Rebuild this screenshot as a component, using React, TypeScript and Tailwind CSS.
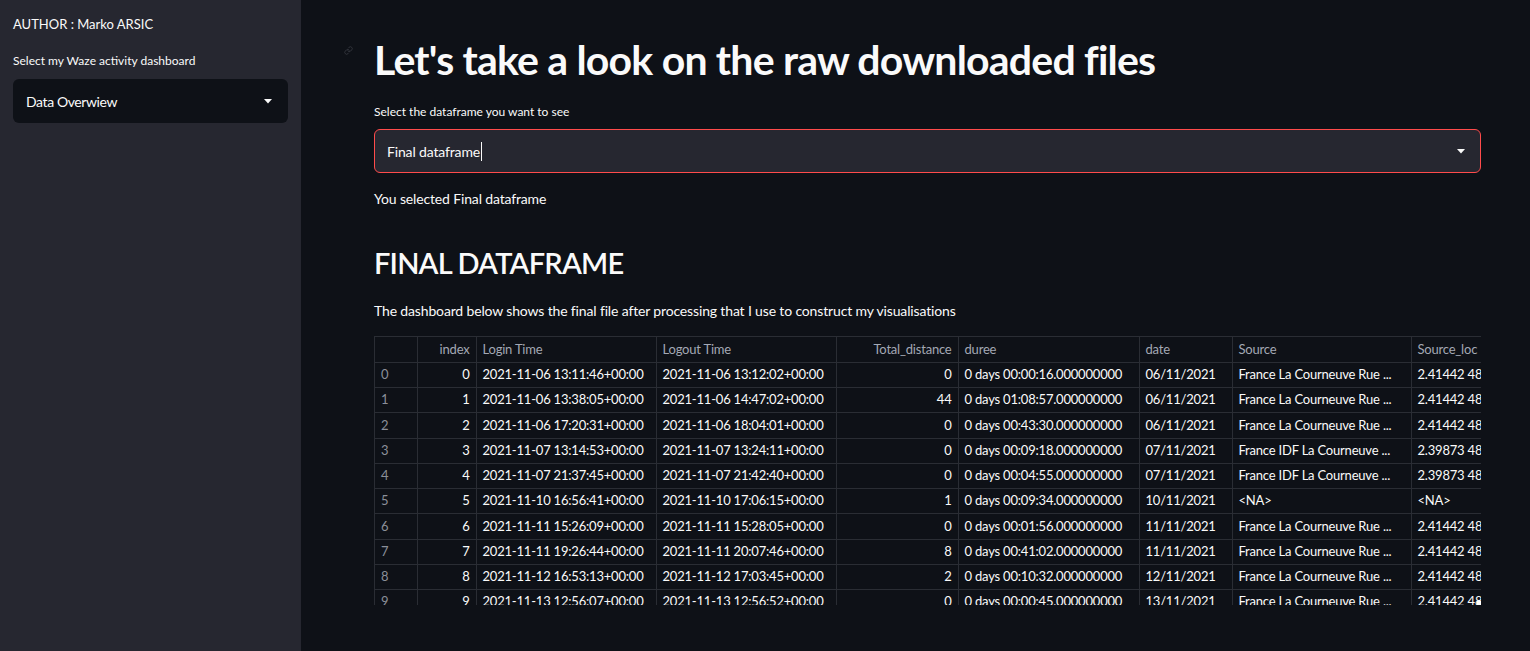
import React from 'react';
import { Link } from 'lucide-react';

const font = { fontFamily: 'Lato, "Noto Sans", sans-serif' };

type Row = [number, string, string, number, string, string, string, string];

const rows: Row[] = [
  [0, '2021-11-06 13:11:46+00:00', '2021-11-06 13:12:02+00:00', 0, '0 days 00:00:16.000000000', '06/11/2021', 'France La Courneuve Rue ...', '2.41442 48.'],
  [1, '2021-11-06 13:38:05+00:00', '2021-11-06 14:47:02+00:00', 44, '0 days 01:08:57.000000000', '06/11/2021', 'France La Courneuve Rue ...', '2.41442 48.'],
  [2, '2021-11-06 17:20:31+00:00', '2021-11-06 18:04:01+00:00', 0, '0 days 00:43:30.000000000', '06/11/2021', 'France La Courneuve Rue ...', '2.41442 48.'],
  [3, '2021-11-07 13:14:53+00:00', '2021-11-07 13:24:11+00:00', 0, '0 days 00:09:18.000000000', '07/11/2021', 'France IDF La Courneuve ...', '2.39873 48.'],
  [4, '2021-11-07 21:37:45+00:00', '2021-11-07 21:42:40+00:00', 0, '0 days 00:04:55.000000000', '07/11/2021', 'France IDF La Courneuve ...', '2.39873 48.'],
  [5, '2021-11-10 16:56:41+00:00', '2021-11-10 17:06:15+00:00', 1, '0 days 00:09:34.000000000', '10/11/2021', '<NA>', '<NA>'],
  [6, '2021-11-11 15:26:09+00:00', '2021-11-11 15:28:05+00:00', 0, '0 days 00:01:56.000000000', '11/11/2021', 'France La Courneuve Rue ...', '2.41442 48.'],
  [7, '2021-11-11 19:26:44+00:00', '2021-11-11 20:07:46+00:00', 8, '0 days 00:41:02.000000000', '11/11/2021', 'France La Courneuve Rue ...', '2.41442 48.'],
  [8, '2021-11-12 16:53:13+00:00', '2021-11-12 17:03:45+00:00', 2, '0 days 00:10:32.000000000', '12/11/2021', 'France La Courneuve Rue ...', '2.41442 48.'],
  [9, '2021-11-13 12:56:07+00:00', '2021-11-13 12:56:52+00:00', 0, '0 days 00:00:45.000000000', '13/11/2021', 'France La Courneuve Rue ...', '2.41442 48.'],
];

function Caret() {
  return (
    <svg width="8" height="5" viewBox="0 0 8 5" className="shrink-0">
      <path d="M0 0 H8 L4 4.5 Z" fill="#fafafa" />
    </svg>
  );
}

const cell = 'border-r border-b border-[#2a2d34] px-[6px] h-[25.25px] whitespace-nowrap overflow-hidden';

export default function App() {
  return (
    <div className="flex w-[1530px] h-[651px] bg-[#0e1117] text-[#fafafa] overflow-hidden" style={font}>
      <aside className="w-[301px] shrink-0 bg-[#262730] px-[13px] pt-[16px]">
        <p className="text-[13px] leading-[16px]">AUTHOR : Marko ARSIC</p>
        <p className="text-[12px] leading-[16px] mt-[21px]">Select my Waze activity dashboard</p>
        <div className="mt-[10px] h-[44px] rounded-[6px] bg-[#0e1117] flex items-center justify-between pl-[13px] pr-[16px]">
          <span className="text-[14px] tracking-[-0.4px]">Data Overwiew</span>
          <Caret />
        </div>
      </aside>

      <main className="flex-1 pl-[73px] pt-[36px]">
        <div className="w-[1107px]">
          <div className="relative">
            <Link size={9} className="absolute left-[-30px] top-[10px] text-[#3b3e46]" />
            <h1 className="text-[41px] leading-[48px] font-bold tracking-[-0.8px]">Let's take a look on the raw downloaded files</h1>
          </div>

          <p className="text-[12px] leading-[16px] mt-[20px]">Select the dataframe you want to see</p>
          <div className="mt-[9px] h-[44px] rounded-[6px] bg-[#262730] border border-[#ff4b4b] flex items-center justify-between pl-[12px] pr-[15px]">
            <span className="text-[14px] tracking-[-0.15px] flex items-center">
              Final dataframe
              <span className="inline-block w-px h-[19px] bg-[#fafafa] ml-[1px]" />
            </span>
            <Caret />
          </div>

          <p className="text-[14px] leading-[18px] tracking-[-0.15px] mt-[17px]">You selected Final dataframe</p>

          <h2 className="text-[29px] leading-[38px] font-semibold tracking-[-0.8px] mt-[36px]">FINAL DATAFRAME</h2>

          <p className="text-[14px] leading-[18px] tracking-[-0.15px] mt-[20px]">The dashboard below shows the final file after processing that I use to construct my visualisations</p>

          <div className="relative mt-[16px] h-[269px] w-[1107px] overflow-hidden border-l border-t border-[#2a2d34]">
            <table className="table-fixed border-collapse text-[13px] tracking-[-0.2px] w-[1160px]">
              <colgroup>
                <col className="w-[42px]" />
                <col className="w-[59px]" />
                <col className="w-[180px]" />
                <col className="w-[180px]" />
                <col className="w-[122px]" />
                <col className="w-[181px]" />
                <col className="w-[93px]" />
                <col className="w-[179px]" />
                <col className="w-[124px]" />
              </colgroup>
              <thead>
                <tr className="text-[#a3a8b4]">
                  <th className={`${cell} font-normal`} />
                  <th className={`${cell} font-normal text-right`}>index</th>
                  <th className={`${cell} font-normal text-left`}>Login Time</th>
                  <th className={`${cell} font-normal text-left`}>Logout Time</th>
                  <th className={`${cell} font-normal text-right`}>Total_distance</th>
                  <th className={`${cell} font-normal text-left`}>duree</th>
                  <th className={`${cell} font-normal text-left`}>date</th>
                  <th className={`${cell} font-normal text-left`}>Source</th>
                  <th className={`${cell} font-normal text-left`}>Source_loc</th>
                </tr>
              </thead>
              <tbody>
                {rows.map((r) => (
                  <tr key={r[0]}>
                    <td className={`${cell} text-[#8b8f99]`}>{r[0]}</td>
                    <td className={`${cell} text-right`}>{r[0]}</td>
                    <td className={cell}>{r[1]}</td>
                    <td className={cell}>{r[2]}</td>
                    <td className={`${cell} text-right`}>{r[3]}</td>
                    <td className={cell}>{r[4]}</td>
                    <td className={cell}>{r[5]}</td>
                    <td className={cell}>{r[6]}</td>
                    <td className={cell}>{r[7]}</td>
                  </tr>
                ))}
              </tbody>
            </table>
            <span className="absolute right-0 bottom-0 w-[4px] h-[4px] bg-white" />
          </div>
        </div>
      </main>
    </div>
  );
}
